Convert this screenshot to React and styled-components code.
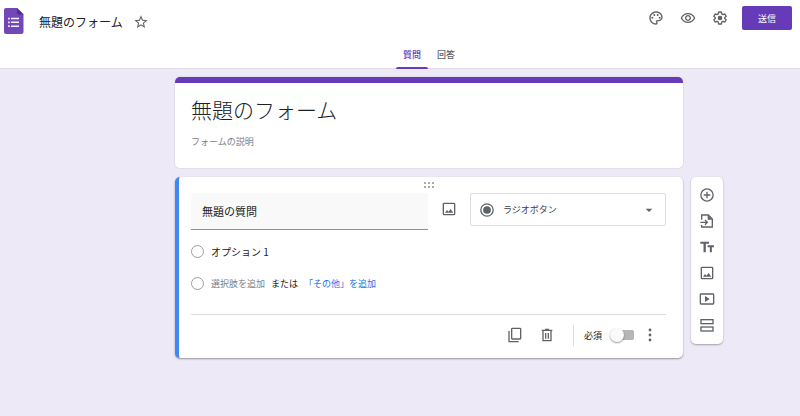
import React from "react";
import styled, { createGlobalStyle, css } from "styled-components";

const purple = "#673ab7";
const slate = "#5f6368";

const GlobalStyle = createGlobalStyle`
  *, *::before, *::after { box-sizing: border-box; }
  body {
    margin: 0;
    min-height: 100vh;
    background: #eee9f7;
    color: #202124;
    font-family: "Noto Sans CJK JP", "Noto Sans", sans-serif;
    font-size: 9px;
  }
  button, input, select { font: inherit; color: inherit; margin: 0; }
`;

const Header = styled.header`
  background: #fff;
  border-bottom: 1px solid #e1dfe5;
`;

const TopBar = styled.div`
  display: flex;
  align-items: flex-start;
  min-height: 43px;
  padding: 6px 8px 0 4px;
`;

const Logo = styled.a`
  display: flex;
  padding-top: 2px;
  margin-right: 15px;
`;

const DocTitle = styled.input`
  width: 86px;
  height: 30px;
  padding: 0;
  border: 0;
  outline: 0;
  background: none;
  font-size: 12px;
`;

const IconButton = styled.button`
  display: flex;
  align-items: center;
  justify-content: center;
  flex: none;
  width: ${(p) => (p.$wide ? 32 : 16)}px;
  height: ${(p) => p.$height || 16}px;
  padding: 0;
  border: 0;
  background: none;
  color: ${slate};
  cursor: pointer;
`;

const Actions = styled.div`
  display: flex;
  align-items: center;
  margin-left: auto;
`;

const SendButton = styled.button`
  width: 50px;
  height: 24px;
  margin-left: 6px;
  padding: 0;
  border: 0;
  border-radius: 2px;
  background: ${purple};
  color: #fff;
  cursor: pointer;
`;

const Tabs = styled.nav`
  display: flex;
  justify-content: center;
  gap: 2px;
  padding-left: 58px;
`;

const Tab = styled.button`
  position: relative;
  height: 25px;
  padding: 0 7px 2px;
  border: 0;
  background: none;
  color: ${(p) => (p.$active ? purple : slate)};
  font-weight: 500;
  cursor: pointer;
  ${(p) =>
    p.$active &&
    css`
      &::after {
        content: "";
        position: absolute;
        left: 0;
        right: 0;
        bottom: -1px;
        height: 2px;
        border-radius: 2px 2px 0 0;
        background: ${purple};
      }
    `}
`;

const Page = styled.main`
  display: grid;
  grid-template-columns: 1fr minmax(0, 508px) minmax(48px, 1fr);
  row-gap: 9px;
  column-gap: 8px;
  align-items: start;
  padding: 8px 0 24px 58px;
`;

const Card = styled.section`
  grid-column: 2;
  overflow: hidden;
  border-radius: 5px;
  background: #fff;
`;

const TitleCard = styled(Card)`
  padding: 8px 16px 19px;
  border-top: 6px solid ${purple};
  box-shadow: 0 0 0 1px #e3dfea;
`;

const FormTitle = styled.input`
  display: block;
  width: 100%;
  height: 35px;
  padding: 0;
  border: 0;
  outline: 0;
  background: none;
  font-size: 21px;
  font-weight: 300;
`;

const FormDescription = styled.input`
  display: block;
  width: 100%;
  height: 16px;
  margin-top: 7px;
  padding: 0;
  border: 0;
  outline: 0;
  background: none;
  &::placeholder { color: #7c8085; opacity: 1; }
`;

const QuestionCard = styled(Card)`
  padding: 5px 17px 0 12px;
  border-left: 4px solid #4285f4;
  box-shadow: 0 1px 2px rgba(0, 0, 0, 0.38);
`;

const DragHandle = styled.div`
  display: flex;
  justify-content: center;
  height: 11px;
  color: #a8abae;
`;

const QuestionRow = styled.div`
  display: flex;
  align-items: flex-start;
`;

const QuestionInput = styled.input`
  flex: 1;
  min-width: 0;
  height: 37px;
  padding: 0 11px;
  border: 0;
  border-bottom: 1px solid #8d9196;
  border-radius: 2px 2px 0 0;
  outline: 0;
  background: #f9f9f9;
  font-size: 11px;
`;

const ImageSlot = styled.div`
  display: flex;
  justify-content: center;
  width: 42px;
`;

const TypePicker = styled.label`
  display: grid;
  grid-template-columns: 16px 1fr 16px;
  align-items: center;
  column-gap: 8px;
  width: 196px;
  height: 33px;
  padding: 0 8px;
  border: 1px solid #dadce0;
  border-radius: 2px;
  color: ${slate};
`;

const TypeSelect = styled.select`
  appearance: none;
  width: 100%;
  height: 24px;
  padding: 0;
  border: 0;
  outline: 0;
  background: none;
  color: #3c4043;
`;

const Options = styled.div`
  display: grid;
  row-gap: 16px;
  padding: 13px 0 23px;
`;

const OptionRow = styled.div`
  display: flex;
  align-items: center;
  height: 16px;
`;

const Radio = styled.input`
  appearance: none;
  flex: none;
  width: 13px;
  height: 13px;
  margin-right: 7px;
  border: 1px solid #999c9f;
  border-radius: 50%;
  background: #fff;
`;

const OptionInput = styled.input`
  flex: 1;
  height: 16px;
  padding: 0;
  border: 0;
  outline: 0;
  background: none;
  font-size: 10px;
`;

const TextButton = styled.button`
  padding: 0;
  border: 0;
  background: none;
  color: ${(p) => (p.$accent ? "#1a73e8" : "#7c8085")};
  cursor: pointer;
`;

const OrText = styled.span`
  margin: 0 6px;
`;

const CardFooter = styled.footer`
  display: flex;
  align-items: center;
  justify-content: flex-end;
  height: 44px;
  padding: 0 8px 3px 0;
  border-top: 1px solid #dadce0;
`;

const Separator = styled.span`
  width: 1px;
  height: 21px;
  margin: 0 10px;
  background: #dadce0;
`;

const RequiredLabel = styled.label`
  display: flex;
  align-items: center;
  gap: 8px;
  margin-right: 7px;
`;

const Switch = styled.input`
  appearance: none;
  display: flex;
  align-items: center;
  width: 25px;
  height: 14px;
  border-radius: 7px;
  background: linear-gradient(#b5b5b5, #b5b5b5) center / 23px 10px no-repeat;
  &::before {
    content: "";
    width: 14px;
    height: 14px;
    border-radius: 50%;
    background: #fafafa;
    box-shadow: 0 1px 2px rgba(0, 0, 0, 0.4);
  }
  &:checked { justify-content: flex-end; }
`;

const ToolRail = styled.aside`
  grid-column: 3;
  display: flex;
  flex-direction: column;
  align-items: center;
  gap: 10px;
  width: 32px;
  padding: 10px 0 11px;
  border-radius: 5px;
  background: #fff;
  box-shadow: 0 1px 2px rgba(0, 0, 0, 0.32);
`;

const Svg = styled.svg`
  display: block;
  flex: none;
  fill: currentColor;
`;

const Line = styled(Svg)`
  fill: none;
  stroke: currentColor;
  stroke-width: 2;
`;

const icon = { width: 16, height: 16, viewBox: "0 0 24 24", "aria-hidden": true };

const FormsLogo = () => (
  <Svg width="20" height="26" viewBox="0 0 20 26" aria-hidden="true">
    <path fill="#7248b9" d="M2 0h11l6.500 6.500V24a2 2 0 0 1-2 2H2a2 2 0 0 1-2-2V2a2 2 0 0 1 2-2z" />
    <path fill="#4d2f85" d="M13 0l6.500 6.500H14.500A1.500 1.500 0 0 1 13 5z" />
    <path
      fill="#f6f2fc"
      d="M7 9.800h8v1.500H7zM7 13.600h8v1.500H7zM7 17.400h8v1.500H7zM4.100 9.700h1.700v1.700H4.100zM4.100 13.500h1.700v1.700H4.100zM4.100 17.300h1.700v1.700H4.100z"
    />
  </Svg>
);

const StarIcon = () => (
  <Svg {...icon}>
    <path d="M22 9.240l-7.190-.62L12 2 9.190 8.630 2 9.240l5.460 4.730L5.820 21 12 17.270 18.180 21l-1.630-7.030L22 9.240zM12 15.400l-3.760 2.270 1-4.280-3.320-2.880 4.380-.38L12 6.100l1.710 4.040 4.380.38-3.320 2.880 1 4.280L12 15.400z" />
  </Svg>
);

const PaletteIcon = () => (
  <Svg {...icon}>
    <path d="M12 22C6.490 22 2 17.510 2 12S6.490 2 12 2s10 4.040 10 9c0 3.310-2.690 6-6 6h-1.770c-.28 0-.5.22-.5.5 0 .12.05.23.13.33.41.47.64 1.060.64 1.670A2.500 2.500 0 0 1 12 22zm0-18c-4.410 0-8 3.590-8 8s3.590 8 8 8c.28 0 .5-.22.5-.5a.54.54 0 0 0-.14-.35c-.41-.46-.63-1.050-.63-1.650a2.500 2.500 0 0 1 2.500-2.500H16c2.210 0 4-1.790 4-4 0-3.860-3.590-7-8-7z" />
    <circle cx="6.500" cy="11.500" r="1.500" />
    <circle cx="9.500" cy="7.500" r="1.500" />
    <circle cx="14.500" cy="7.500" r="1.500" />
    <circle cx="17.500" cy="11.500" r="1.500" />
  </Svg>
);

const EyeIcon = () => (
  <Svg {...icon}>
    <path d="M12 6.500c3.790 0 7.170 2.130 8.820 5.500-1.650 3.370-5.020 5.500-8.820 5.500S4.830 15.370 3.180 12C4.830 8.630 8.210 6.500 12 6.500m0-2C7 4.500 2.730 7.610 1 12c1.730 4.390 6 7.500 11 7.500s9.270-3.110 11-7.500c-1.730-4.390-6-7.500-11-7.500zm0 5a2.500 2.500 0 0 1 0 5 2.500 2.500 0 0 1 0-5m0-2c-2.480 0-4.500 2.020-4.500 4.500s2.020 4.500 4.500 4.500 4.500-2.020 4.500-4.500-2.020-4.500-4.500-4.500z" />
  </Svg>
);

const GearIcon = () => (
  <Line {...icon}>
    <path
      strokeLinejoin="round"
      d="M10 3h4l.6 2.900 1.900 1.100 2.800-1 2 3.500-2.200 1.900v1.200l2.200 1.900-2 3.500-2.800-1-1.900 1.100L14 21h-4l-.6-2.900L7.500 17l-2.800 1-2-3.500 2.200-1.900v-1.200L2.700 9.500l2-3.500 2.800 1 1.900-1.100z"
    />
    <circle cx="12" cy="12" r="2.500" fill="currentColor" />
  </Line>
);

const ImageIcon = () => (
  <Line {...icon}>
    <rect x="3.500" y="3.500" width="17" height="17" rx="1" />
    <path fill="currentColor" stroke="none" d="M6 17.500l3-4 2.200 2.600 3.200-4.200 4 5.600z" />
  </Line>
);

const RadioIcon = () => (
  <Line {...icon}>
    <circle cx="12" cy="12" r="9.300" />
    <circle cx="12" cy="12" r="5.800" fill="currentColor" stroke="none" />
  </Line>
);

const CaretIcon = () => (
  <Svg {...icon}>
    <path d="M7 10l5 5 5-5z" />
  </Svg>
);

const CopyIcon = () => (
  <Line {...icon}>
    <rect x="7" y="2" width="13.500" height="16" rx="1" />
    <path d="M3 6v16h14.500" />
  </Line>
);

const TrashIcon = () => (
  <Line {...icon}>
    <path d="M6 6v14.500h12V6M4 5h16M9 3.500h6M10 9v8.500M14 9v8.500" />
  </Line>
);

const MoreIcon = () => (
  <Svg {...icon}>
    <circle cx="12" cy="4.500" r="2.100" />
    <circle cx="12" cy="12" r="2.100" />
    <circle cx="12" cy="19.500" r="2.100" />
  </Svg>
);

const AddIcon = () => (
  <Line {...icon}>
    <circle cx="12" cy="12" r="9.200" />
    <path d="M12 7v10M7 12h10" />
  </Line>
);

const ImportIcon = () => (
  <Line {...icon}>
    <path d="M4 10V3h10l6 6v12H4v-3M2 14h10M9 10.500l3.500 3.500L9 17.500" />
    <path fill="currentColor" stroke="none" d="M13 3l7 7h-7z" />
  </Line>
);

const TextIcon = () => (
  <Svg {...icon}>
    <path d="M2 4h13v3.200h-4.800V20H6.800V7.200H2zM13 9.500h9.500v3H19.300V20h-3v-7.500H13z" />
  </Svg>
);

const VideoIcon = () => (
  <Line {...icon}>
    <rect x="2" y="4.500" width="20" height="15" rx="1" />
    <path fill="currentColor" stroke="none" d="M9 7.500v9l7-4.500z" />
  </Line>
);

const SectionIcon = () => (
  <Line {...icon}>
    <rect x="3" y="4" width="18" height="6" />
    <rect x="3" y="15" width="18" height="6" />
  </Line>
);

const HandleDots = () => (
  <Svg width="10" height="6" viewBox="0 0 10 6" aria-hidden="true">
    <path d="M0 0h2v2H0zM4 0h2v2H4zM8 0h2v2H8zM0 4h2v2H0zM4 4h2v2H4zM8 4h2v2H8z" />
  </Svg>
);

const headerActions = [
  ["テーマをカスタマイズ", PaletteIcon],
  ["プレビュー", EyeIcon],
  ["設定", GearIcon],
];

const railTools = [
  ["質問を追加", AddIcon],
  ["質問をインポート", ImportIcon],
  ["タイトルと説明を追加", TextIcon],
  ["画像を追加", ImageIcon],
  ["動画を追加", VideoIcon],
  ["セクションを追加", SectionIcon],
];

export default function App() {
  return (
    <>
      <GlobalStyle />
      <Header>
        <TopBar>
          <Logo href="#" aria-label="フォーム ホーム">
            <FormsLogo />
          </Logo>
          <DocTitle aria-label="ドキュメント名" defaultValue="無題のフォーム" />
          <IconButton $wide $height={32} aria-label="スターを付ける">
            <StarIcon />
          </IconButton>
          <Actions>
            {headerActions.map(([label, Glyph]) => (
              <IconButton key={label} $wide $height={24} aria-label={label}>
                <Glyph />
              </IconButton>
            ))}
            <SendButton>送信</SendButton>
          </Actions>
        </TopBar>
        <Tabs>
          <Tab $active>質問</Tab>
          <Tab>回答</Tab>
        </Tabs>
      </Header>
      <Page>
        <TitleCard>
          <FormTitle aria-label="フォームのタイトル" defaultValue="無題のフォーム" />
          <FormDescription aria-label="フォームの説明" placeholder="フォームの説明" />
        </TitleCard>
        <QuestionCard>
          <DragHandle>
            <HandleDots />
          </DragHandle>
          <QuestionRow>
            <QuestionInput aria-label="質問" defaultValue="無題の質問" />
            <ImageSlot>
              <IconButton $height={32} aria-label="画像を追加">
                <ImageIcon />
              </IconButton>
            </ImageSlot>
            <TypePicker>
              <RadioIcon />
              <TypeSelect aria-label="質問の種類" defaultValue="radio">
                <option value="radio">ラジオボタン</option>
              </TypeSelect>
              <CaretIcon />
            </TypePicker>
          </QuestionRow>
          <Options>
            <OptionRow>
              <Radio type="radio" name="choice" aria-label="オプション 1" />
              <OptionInput aria-label="選択肢 1" defaultValue="オプション 1" />
            </OptionRow>
            <OptionRow>
              <Radio type="radio" name="choice" aria-label="選択肢を追加" />
              <TextButton>選択肢を追加</TextButton>
              <OrText>または</OrText>
              <TextButton $accent>「その他」を追加</TextButton>
            </OptionRow>
          </Options>
          <CardFooter>
            <IconButton $wide $height={32} aria-label="コピーを作成">
              <CopyIcon />
            </IconButton>
            <IconButton $wide $height={32} aria-label="削除">
              <TrashIcon />
            </IconButton>
            <Separator />
            <RequiredLabel>
              必須
              <Switch type="checkbox" role="switch" />
            </RequiredLabel>
            <IconButton $height={32} aria-label="その他のオプション">
              <MoreIcon />
            </IconButton>
          </CardFooter>
        </QuestionCard>
        <ToolRail aria-label="ツール">
          {railTools.map(([label, Glyph]) => (
            <IconButton key={label} aria-label={label}>
              <Glyph />
            </IconButton>
          ))}
        </ToolRail>
      </Page>
    </>
  );
}
